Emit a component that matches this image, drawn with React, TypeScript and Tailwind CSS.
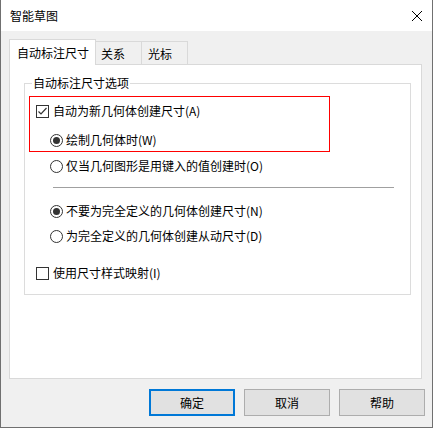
function CheckBox({ checked }: { checked?: boolean }) {
  return (
    <span className="w-[13px] h-[13px] border border-[#333333] bg-white flex items-center justify-center shrink-0">
      {checked && (
        <svg width="11" height="11" viewBox="0 0 11 11">
          <polyline points="1.5,5.5 4,8 9.5,2" fill="none" stroke="#333333" strokeWidth="1.2" />
        </svg>
      )}
    </span>
  )
}

function Radio({ checked }: { checked?: boolean }) {
  return (
    <span className="w-[13px] h-[13px] rounded-full border border-[#333333] bg-white flex items-center justify-center shrink-0">
      {checked && <span className="w-[7px] h-[7px] rounded-full bg-[#333333]" />}
    </span>
  )
}

function Row({ className, children }: { className: string; children: React.ReactNode }) {
  return <div className={`h-[16px] flex items-center ${className}`}>{children}</div>
}

export default function App() {
  return (
    <div className="w-[433px] h-[428px] bg-[#f0f0f0] border-x border-b border-[#707070] flex flex-col text-[12px] leading-[16px] text-black font-['Noto_Sans_CJK_SC',sans-serif]">
      {/* title bar */}
      <div className="h-[31px] bg-white flex items-center justify-between pl-[9px] pr-[10px] shrink-0">
        <span>智能草图</span>
        <svg width="10" height="10" viewBox="0 0 10 10">
          <line x1="0" y1="0" x2="10" y2="10" stroke="#000" strokeWidth="1" />
          <line x1="10" y1="0" x2="0" y2="10" stroke="#000" strokeWidth="1" />
        </svg>
      </div>

      {/* tabs */}
      <div className="mt-[8px] pl-[8px] flex items-end h-[26px] shrink-0">
        <div className="relative z-10 w-[87px] h-[26px] bg-white border-t border-x border-[#d9d9d9] pl-[7px] flex items-center">
          自动标注尺寸
        </div>
        <div className="w-[46px] h-[24px] border-t border-r border-[#d9d9d9] pl-[5px] flex items-center">关系</div>
        <div className="w-[46px] h-[24px] border-t border-r border-[#d9d9d9] pl-[6px] flex items-center">光标</div>
      </div>

      {/* tab panel */}
      <div className="-mt-px ml-[8px] w-[413px] h-[315px] bg-white border border-[#d9d9d9] shrink-0">
        <div className="relative mt-[18px] ml-[14px] w-[387px] h-[212px] border border-[#dcdcdc]">
          <span className="absolute -top-[9px] left-[7px] px-[1px] bg-white">自动标注尺寸选项</span>

          <div className="mt-[12px] ml-[4px] w-[301px] h-[56px] border border-[#ff0000]">
            <Row className="mt-[6px] ml-[6px] gap-[4px]">
              <CheckBox checked />
              <span>自动为新几何体创建尺寸(A)</span>
            </Row>
            <Row className="mt-[13px] ml-[20px] gap-[3px]">
              <Radio checked />
              <span>绘制几何体时(W)</span>
            </Row>
          </div>

          <Row className="mt-[6px] ml-[25px] gap-[3px]">
            <Radio />
            <span>仅当几何图形是用键入的值创建时(O)</span>
          </Row>

          <div className="mt-[13px] ml-[28px] w-[341px] h-px bg-[#a0a0a0]" />

          <Row className="mt-[15px] ml-[25px] gap-[3px]">
            <Radio checked />
            <span>不要为完全定义的几何体创建尺寸(N)</span>
          </Row>
          <Row className="mt-[9px] ml-[25px] gap-[3px]">
            <Radio />
            <span>为完全定义的几何体创建从动尺寸(D)</span>
          </Row>

          <Row className="mt-[21px] ml-[11px] gap-[4px]">
            <CheckBox />
            <span>使用尺寸样式映射(I)</span>
          </Row>
        </div>
      </div>

      {/* buttons */}
      <div className="mt-[10px] pl-[148px] flex gap-[9px]">
        <button className="w-[86px] h-[27px] bg-[#e1e1e1] border-2 border-[#0078d7]">确定</button>
        <button className="w-[86px] h-[27px] bg-[#e1e1e1] border border-[#adadad]">取消</button>
        <button className="w-[86px] h-[27px] bg-[#e1e1e1] border border-[#adadad]">帮助</button>
      </div>
    </div>
  )
}
